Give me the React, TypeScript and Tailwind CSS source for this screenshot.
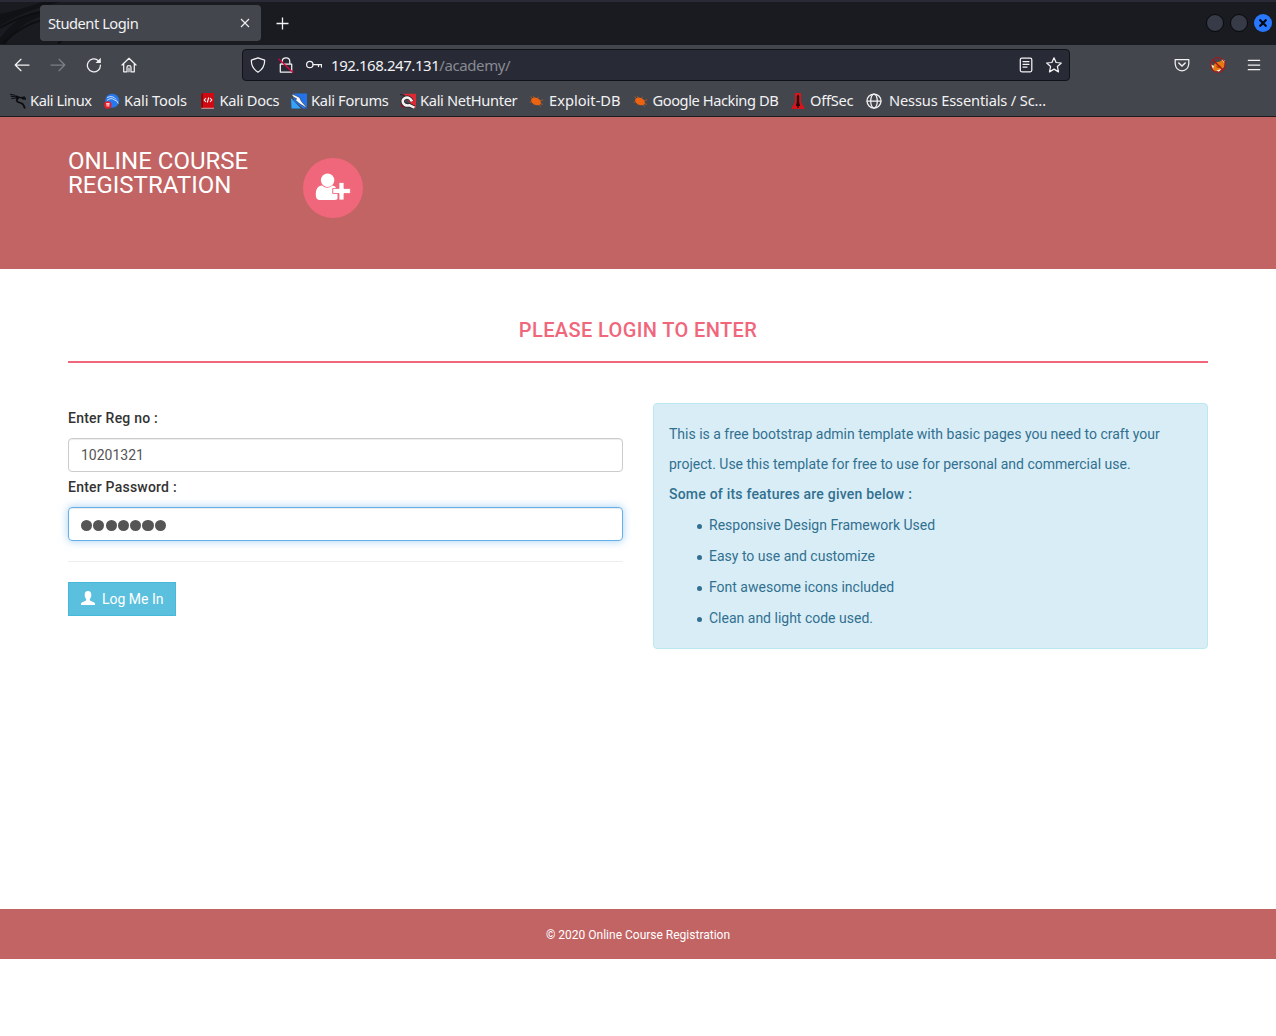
import React from "react";

function NavIcon({ children, size = 16, className = "" }: { children: React.ReactNode; size?: number; className?: string }) {
  return (
    <svg width={size} height={size} viewBox="0 0 16 16" fill="none" stroke="currentColor" strokeWidth="1.25" strokeLinecap="round" strokeLinejoin="round" className={"block shrink-0 " + className}>
      {children}
    </svg>
  );
}

const Dragon = ({ color }: { color: string }) => (
  <g fill="none" stroke={color} strokeLinecap="round">
    <path d="M.5 1.2Q4 1 8.5 5M1 3.2Q5 3 8 5.2M1.8 5.5Q4.5 4.4 8 5.4" strokeWidth="1" />
    <path d="M8 5.2Q5 8.5 9 9.4Q13.4 10 14.6 14.8" strokeWidth="1.9" />
    <path d="M6.5 3.2Q10 5.5 14.2 4.2L15.4 6L12.5 5.8" strokeWidth="1.5" />
  </g>
);

const Roach = () => (
  <g>
    <path d="M4 6L1.5 3.6M5.5 5L4 2.8M8 6L9.5 3.8M3.5 9L.6 9M6 11L4.5 12M10 11L11.5 13.5M11 10.5L14 11.4M10.5 8L14.2 6.8" stroke="#a8592a" strokeWidth=".9" fill="none" />
    <ellipse cx="7" cy="8.4" rx="5.2" ry="3.4" transform="rotate(26 7 8.4)" fill="#ee6310" />
  </g>
);

const bookmarks = [
  { label: "Kali Linux", box: "w-[94px] tracking-[-0.44px]", icon: <Dragon color="#0c0d10" /> },
  {
    label: "Kali Tools", box: "w-[95.5px] tracking-[-0.14px]", icon: (
      <g>
        <circle cx="8.2" cy="7.8" r="7" fill="#2777ee" />
        <path d="M3 4.5Q9 2 12 6.5M3 7.5Q7 4 10.5 7Q13.5 7.5 14.2 10.5" stroke="#cfe3ff" strokeWidth="1" fill="none" />
        <circle cx="3.8" cy="12" r="3.7" fill="#e51d2a" />
        <path d="M2.2 10.7H5.6M3.1 10.7V13.6M4.8 10.7V13.6" stroke="#fff" strokeWidth=".9" />
      </g>
    ),
  },
  {
    label: "Kali Docs", box: "w-[91.5px] tracking-[-0.28px]", icon: (
      <g>
        <path d="M1.3 1.3L3 0H14V15.6H1.3Z" fill="#cf0a12" />
        <path d="M1.3 14.8H14V15.6H1.3Z" fill="#d9c6c6" />
        <path d="M1.3 1.3L3 0V14.4H1.3Z" fill="#8d0509" />
        <path d="M6 5L4.2 7L6 9M10 5L11.8 7L10 9M8.7 4.5L7.3 9.5" stroke="#fff" strokeWidth="1.1" fill="none" />
      </g>
    ),
  },
  {
    label: "Kali Forums", box: "w-[109px] tracking-[-0.31px]", icon: (
      <g>
        <path d="M2 .5H16V15.5H12L3 8Z" fill="#2372e8" />
        <path d="M0 5L10 15.5H.5Z" fill="#35a2fb" />
        <path d="M0 1L4 2.2L8.5 4.5L10.5 8.5L15.8 14.5L13.6 13.8L8.8 10.8L4.8 7.6L5.5 5.6L2.6 4.2Z" fill="#f7f7f5" stroke="#202838" strokeWidth=".5" />
      </g>
    ),
  },
  {
    label: "Kali NetHunter", box: "w-[129px] tracking-[-0.33px]", icon: (
      <g>
        <path d="M3 .8H16V15.5L8 8Z" fill="#df2934" />
        <path d="M.5 7L6 14.8L1 14Z" fill="#8d1521" />
        <path d="M0 1.5L5 2.5" stroke="#202329" strokeWidth="1" />
        <path d="M12 8.4Q9.5 3.6 5.6 4.7Q1.8 6.2 3 9.7Q4.6 13.2 9.5 12.4L14.5 14.6" fill="none" stroke="#202329" strokeWidth="4" />
        <path d="M12 8.4Q9.5 3.6 5.6 4.7Q1.8 6.2 3 9.7Q4.6 13.2 9.5 12.4L14.5 14.6" fill="none" stroke="#f5f3f1" strokeWidth="2.6" />
      </g>
    ),
  },
  { label: "Exploit-DB", box: "w-[103.5px]", icon: <Roach /> },
  { label: "Google Hacking DB", box: "w-[157.5px] tracking-[-0.43px]", icon: <Roach /> },
  {
    label: "OffSec", box: "w-[77px] tracking-[-0.25px]", icon: (
      <g>
        <path d="M5 0H11V9L14.5 15V16H1.5V15L5 9Z" fill="#d9131c" />
        <path d="M8 1.6L9.2 3V9.5L10.2 13H8.7V15H7.3V13H5.8L6.8 9.5V3Z" fill="#23090d" />
      </g>
    ),
  },
];

function BrowserChrome() {
  return (
    <header className="h-[117px] w-full bg-[#44464d] font-['Noto_Sans',sans-serif] text-[14.67px] text-[#f2f2f4]">
      <div className="relative flex h-[45px] items-start overflow-hidden border-t-2 border-[#292a36] bg-[#1a1b20]">
        <svg className="absolute left-0 top-0" width="90" height="42" viewBox="0 0 90 42" fill="none">
          <path d="M0 12Q20 8 42 0L60 0Q20 10 0 24ZM0 36Q18 12 42 9V14Q18 22 6 42H0Z" fill="#111216" />
          <path d="M0 26Q20 14 40 10M2 42Q20 24 42 18M58 42L64 36" stroke="#0e0f12" strokeWidth="2" />
        </svg>
        <div className="relative ml-10 mt-[3px] flex h-9 w-[221px] items-center justify-between rounded bg-[#44464d] pl-2 pr-[11px]">
          <span className="pb-px leading-5 tracking-[-0.46px]">Student Login</span>
          <svg width="10" height="10" viewBox="0 0 10 10" stroke="currentColor" strokeWidth="1.1"><path d="M1 1L9 9M9 1L1 9" /></svg>
        </div>
        <svg className="ml-[15px] mt-[15px]" width="13" height="13" viewBox="0 0 13 13" stroke="currentColor" strokeWidth="1.3"><path d="M6.5 .5V12.5M.5 6.5H12.5" /></svg>
        <div className="ml-auto mr-1 mt-3 flex gap-[6px]">
          <span className="size-[18px] rounded-full border border-[#08090b] bg-[#363b47]" />
          <span className="size-[18px] rounded-full border border-[#08090b] bg-[#363b47]" />
          <span className="flex size-[18px] items-center justify-center rounded-full bg-[#2777ff]">
            <svg width="8" height="8" viewBox="0 0 8 8" stroke="#05080f" strokeWidth="2.2"><path d="M.5 .5L7.5 7.5M7.5 .5L.5 7.5" /></svg>
          </span>
        </div>
      </div>
      <div className="flex h-10 items-center">
        <div className="flex w-[242px] items-center gap-5 pl-[14px]">
          <NavIcon><path d="M15 8H1.2M7 2.3L1.2 8L7 13.7" /></NavIcon>
          <NavIcon className="text-[#7d7f85]"><path d="M1 8H14.8M9 2.3L14.8 8L9 13.7" /></NavIcon>
          <NavIcon><path d="M14.4 8.2A6.5 6.5 0 1 1 12.4 3.7" /><path d="M14.8 .8V6H9.6Z" fill="currentColor" stroke="none" /></NavIcon>
          <NavIcon className="-ml-px"><path d="M1 8L8 1.3L15 8M2.7 6.7V14.8H6V10.2Q6 8.7 8 8.7Q10 8.7 10 10.2V14.8H13.3V6.7M8 11V14.8" /></NavIcon>
        </div>
        <div className="flex h-8 w-[828px] items-center rounded border border-[#111217] bg-[#282a36] pl-[7px] pr-[7px]">
          <NavIcon><path d="M8 .8L14.6 3.2Q15 10.8 8 15.2Q1 10.8 1.4 3.2Z" /></NavIcon>
          <NavIcon className="ml-3"><path d="M4.2 7V4.5Q4.2 .8 8 .8Q11.8 .8 11.8 4.5V7M2.3 7.2H13.7V15H2.3Z" /><path d="M1 2.2L14.8 15.2" stroke="#e6003d" /></NavIcon>
          <NavIcon className="ml-3"><circle cx="3.8" cy="7.5" r="3.2" /><path d="M7 7.5H15.5V10M12.5 7.5V9.5" /></NavIcon>
          <span className="ml-[9px] text-[15px] tracking-[-0.45px]">192.168.247.131<span className="tracking-[-0.4px] text-[#898a92]">/academy/</span></span>
          <NavIcon className="ml-auto"><rect x="2.3" y="1.2" width="11.5" height="13.6" rx="1.5" /><path d="M5 4.5H11M5 7.3H11M5 10H9" /></NavIcon>
          <NavIcon className="ml-3"><path d="M8 .8L10.1 5.5L15.3 6L11.4 9.5L12.5 14.9L8 12.1L3.5 14.9L4.6 9.5L.7 6L5.9 5.5Z" /></NavIcon>
        </div>
        <div className="ml-[104px] flex items-center gap-5">
          <NavIcon><path d="M1.2 2.5H14.8V7Q14 13.5 8 13.8Q2 13.5 1.2 7Z" /><path d="M4.8 6L8 9L11.2 6" strokeWidth="1.5" /></NavIcon>
          <svg width="16" height="16" viewBox="0 0 16 16">
            <path d="M3 9L6 5.5L10 4.5L13 2.5L15 4L14 10L11 13L6 14.5L3 13Z" fill="#e57913" />
            <path d="M1 7.5L4 9L3 12ZM11.5 2L14.5 3.5V6.5ZM6.5 13.5L11 12L9 15Z" fill="#fff1dd" />
            <path d="M6 9L8 8L11 9L10 11L7 11Z" fill="#b74c08" />
            <path d="M3 3L13 13" stroke="#b20d15" strokeWidth="1.2" />
            <circle cx="8" cy="8" r="7.3" stroke="#ba1018" strokeWidth="1" fill="none" />
          </svg>
          <NavIcon><path d="M2.3 3.3H13.7M2.3 8H13.7M2.3 12.7H13.7" /></NavIcon>
        </div>
      </div>
      <nav className="flex h-8 items-center border-b border-[#1c1b20] pl-[10px]">
        {bookmarks.map((b) => (
          <div key={b.label} className={"flex shrink-0 items-center gap-1 " + b.box}>
            <svg width="16" height="16" viewBox="0 0 16 16" className="shrink-0">{b.icon}</svg>
            <span className="whitespace-nowrap pb-0.5 leading-5">{b.label}</span>
          </div>
        ))}
        <NavIcon className="ml-[-1px]"><circle cx="8" cy="8" r="7" /><ellipse cx="8" cy="8" rx="3.3" ry="7" /><path d="M1 8H15" /></NavIcon>
        <span className="ml-[7px] whitespace-nowrap pb-0.5 leading-5 tracking-[-0.16px]">Nessus Essentials / Sc…</span>
      </nav>
    </header>
  );
}

const features = ["Responsive Design Framework Used", "Easy to use and customize", "Font awesome icons included", "Clean and light code used."];

export default function App() {
  return (
    <div className="flex h-[1036px] w-[1276px] flex-col overflow-hidden bg-white font-['Roboto',sans-serif] text-[14px] text-[#333]">
      <BrowserChrome />
      <div className="flex h-[152px] shrink-0 bg-[#c26464] px-[68px] text-white">
        <h1 className="mt-8 w-[235px] text-[24px] leading-6">ONLINE COURSE REGISTRATION</h1>
        <div className="mt-[41px] flex size-[60px] items-center justify-center rounded-full bg-[#f0677c]">
          <svg width="36" height="28" viewBox="0 0 36 28" className="mb-[2px]">
            <path d="M7 12.5C3 12.5 .8 16 .8 22C.8 25 2 27 5 27H19.5Q21.5 27 22.5 26V20.5H17.5V15.5H21.5Q20 12.5 17.5 12.5Q12 17 7 12.5Z" fill="white" />
            <circle cx="12.6" cy="7.3" r="6.7" fill="white" />
            <path d="M24 9.5H29V15.5H35.4V20.5H29V27H24V20.5H17.8V15.5H24Z" fill="white" stroke="#f0677c" strokeWidth=".8" />
          </svg>
        </div>
      </div>
      <main className="h-[640px] shrink-0 px-[68px] pt-[45px]">
        <h2 className="h-[49px] border-b-2 border-[#f0677c] text-center text-[20px] font-medium leading-8 tracking-[0.38px] text-[#f0677c]">PLEASE LOGIN TO ENTER</h2>
        <div className="mt-10 grid grid-cols-2 gap-[30px]">
          <form className="pt-[5px]">
            <label className="block h-[30px] font-medium leading-5 tracking-[0.22px]">Enter Reg no :</label>
            <div className="flex h-[34px] items-center rounded border border-[#ccc] px-3 text-[#555] shadow-[inset_0_1px_1px_rgba(0,0,0,0.075)]">10201321</div>
            <label className="mt-[5px] block h-[30px] font-medium leading-5 tracking-[0.22px]">Enter Password :</label>
            <div className="flex h-[34px] items-center gap-[1.2px] rounded border border-[#66afe9] px-3 pt-[2px] shadow-[inset_0_1px_1px_rgba(0,0,0,0.075),0_0_8px_rgba(102,175,233,0.6)]">
              {Array.from({ length: 7 }, (_, i) => <span key={i} className="h-[11px] w-[11.1px] rounded-full bg-[#555]" />)}
            </div>
            <hr className="my-5 border-[#eee]" />
            <button type="button" className="flex h-[34px] w-[108px] items-center border border-[#46b8da] bg-[#5bc0de] pl-3 text-white">
              <svg width="14" height="14" viewBox="0 0 14 14" className="mb-[2px] mr-[7px]"><path d="M7 0C4.7 0 3.7 1.5 3.7 4C3.7 6 4.6 7.4 5.2 8V9Q5 9.7 3 10.4Q0 11.3 0 12.5V14H14V12.5Q14 11.3 11 10.4Q9 9.7 8.8 9V8C9.4 7.4 10.3 6 10.3 4C10.3 1.5 9.3 0 7 0Z" fill="currentColor" /></svg>
              Log Me In
            </button>
          </form>
          <section className="h-[246px] rounded border border-[#bce8f1] bg-[#d9edf7] p-[15px] leading-[30px] text-[#31708f]">
            <p>This is a free bootstrap admin template with basic pages you need to craft your project. Use this template for free to use for personal and commercial use.</p>
            <strong className="block font-medium tracking-[0.21px]">Some of its features are given below :</strong>
            <ul className="pl-[28px] pt-px">
              {features.map((f) => (
                <li key={f} className="flex h-[31px] items-center gap-[7px] leading-[31px]">
                  <span className="mt-[2px] size-[5px] rounded-full bg-current" />
                  {f}
                </li>
              ))}
            </ul>
          </section>
        </div>
      </main>
      <footer className="flex h-[50px] shrink-0 items-center justify-center bg-[#c26464] pt-px text-[12px] text-white">© 2020 Online Course Registration</footer>
    </div>
  );
}
